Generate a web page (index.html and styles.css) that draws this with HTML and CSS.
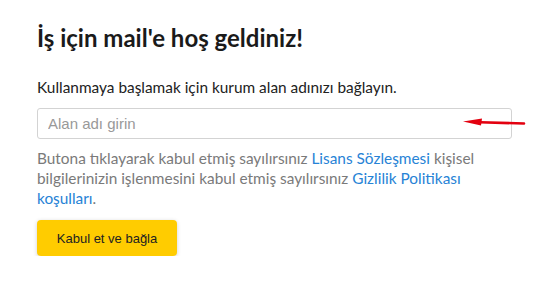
FILE: index.html
```html
<!DOCTYPE html>
<html lang="tr">
<head>
<meta charset="utf-8">
<link rel="stylesheet" href="styles.css">
</head>
<body>
<main class="page">
  <h1 class="title">İş için mail'e hoş geldiniz!</h1>
  <p class="lead">Kullanmaya başlamak için kurum alan adınızı bağlayın.</p>
  <div class="field">
    <input class="input" type="text" placeholder="Alan adı girin">
    <svg class="arrow" width="64" height="12" viewBox="0 0 64 12">
      <path d="M62 7.5 L18 6.2" stroke="#e3000f" stroke-width="2.6" fill="none" stroke-linecap="round"/>
      <path d="M1 5.6 L20 2.6 L19 9.4 Z" fill="#e3000f"/>
    </svg>
  </div>
  <p class="terms">Butona tıklayarak kabul etmiş sayılırsınız <a href="#">Lisans Sözleşmesi</a> kişisel bilgilerinizin işlenmesini kabul etmiş sayılırsınız <a href="#">Gizlilik Politikası koşulları</a>.</p>
  <button class="btn" type="button">Kabul et ve bağla</button>
</main>
</body>
</html>
```
FILE: styles.css
```css
html, body {
  margin: 0;
  background: #fff;
}
.page {
  padding: 23px 0 0 37px;
  width: 475px;
}
.title {
  margin: 0;
  font-family: Lato, sans-serif;
  font-weight: 700;
  font-size: 24px;
  line-height: 30px;
  color: #1a1a1a;
}
.lead {
  margin: 24px 0 0;
  font-family: Lato, sans-serif;
  font-size: 15.4px;
  line-height: 20px;
  color: #222;
}
.field {
  position: relative;
  margin-top: 11px;
}
.input {
  display: block;
  box-sizing: border-box;
  width: 475px;
  height: 31px;
  margin: 0;
  padding: 0 10px;
  border: 1px solid #d3d3d3;
  border-radius: 3px;
  font-family: "Liberation Sans", Arial, sans-serif;
  font-size: 15px;
  color: #222;
  outline: none;
}
.input::placeholder {
  color: #999;
}
.arrow {
  position: absolute;
  left: 425px;
  top: 8px;
}
.terms {
  margin: 9px 0 0;
  font-family: Lato, sans-serif;
  font-size: 15.4px;
  line-height: 20px;
  color: #7a7a7a;
}
.terms a {
  color: #2783d6;
  text-decoration: none;
}
.btn {
  display: block;
  margin-top: 12px;
  width: 140px;
  height: 36px;
  border: none;
  border-radius: 4px;
  background: #ffcc00;
  box-shadow: 0 1px 4px rgba(0,0,0,0.18);
  font-family: "Liberation Sans", Arial, sans-serif;
  font-size: 13px;
  color: #222;
  padding: 0;
}
```
